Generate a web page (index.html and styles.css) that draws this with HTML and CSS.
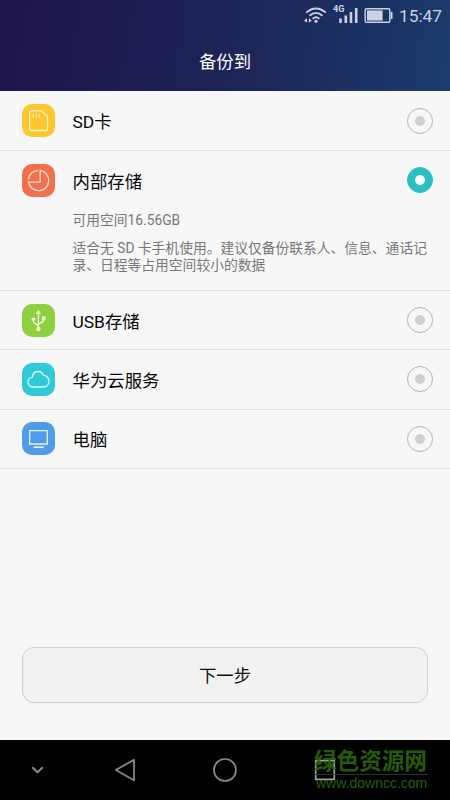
FILE: index.html
```html
<!DOCTYPE html>
<html lang="zh-CN">
<head>
<meta charset="utf-8">
<title>备份到</title>
<link rel="stylesheet" href="styles.css">
</head>
<body>
<div class="screen">
  <header class="header">
    <div class="status">
      <svg class="status-icons" width="92" height="24" viewBox="0 0 92 24" fill="none" stroke="#cdd1e2">
        <g stroke-width="1.8">
          <path d="M2.2 12.6Q12 4.4 21.8 12.6"/>
          <path d="M5.4 15.8Q12 10 18.6 15.8"/>
          <path d="M8.6 18.8Q12 15.8 15.4 18.8"/>
        </g>
        <circle cx="12" cy="21.3" r="1.6" fill="#cdd1e2" stroke="none"/>
        <path d="M3 18.2v4.6L0 20.5zM4.8 18.2v4.6l3-2.3z" fill="#cdd1e2" stroke="none"/>
        <path d="M36.5 18.5V23M41.8 15.5V23M47 12V23M52.2 8V23" stroke-width="2.6"/>
        <rect x="61.2" y="8.8" width="24.6" height="13.4" rx="1.3" stroke-width="1.4"/>
        <rect x="63" y="10.4" width="15.6" height="10.2" fill="#cdd1e2" stroke="none"/>
        <path d="M87.6 12v7" stroke-width="1.8"/>
      </svg>
      <span class="network">4G</span>
      <span class="clock">15:47</span>
    </div>
    <h1 class="title">备份到</h1>
  </header>

  <main class="content">
    <ul class="list">
      <li class="item">
        <div class="row">
          <svg class="icon" viewBox="0 0 33 33"><rect width="33" height="33" rx="10" fill="#fdc72f"/><g fill="none" stroke="#fff3bd" stroke-width="1.3" stroke-linejoin="round"><path d="M9.2 6.8H19.5L25.5 12.5V25a1.5 1.5 0 0 1-1.5 1.5H9.2A1.5 1.5 0 0 1 7.7 25V8.3A1.5 1.5 0 0 1 9.2 6.8Z"/><path d="M11.2 9.5V14M14.2 9.5V14M17.2 9.5V14" stroke-width="1"/></g></svg>
          <span class="name">SD卡</span><span class="radio"></span>
        </div>
      </li>
      <li class="item">
        <div class="row">
          <svg class="icon" viewBox="0 0 33 33"><rect width="33" height="33" rx="10" fill="#f2714d"/><g fill="none" stroke="#ffddd0" stroke-width="1.4"><path d="M18.2 6.4A10.2 10.2 0 1 1 6.5 18.1H18.2Z"/><path d="M6.3 15.6A10.2 10.2 0 0 1 15.8 6.4" stroke-width="1.1"/></g></svg>
          <span class="name">内部存储</span><span class="radio checked"></span>
        </div>
        <div class="details">
          <p class="space">可用空间16.56GB</p>
          <p class="hint">适合无 SD 卡手机使用。建议仅备份联系人、信息、通话记录、日程等占用空间较小的数据</p>
        </div>
      </li>
      <li class="item">
        <div class="row">
          <svg class="icon" viewBox="0 0 33 33"><rect width="33" height="33" rx="10" fill="#8ed03f"/><g fill="none" stroke="#f4ffe4" stroke-width="1.3"><path d="M16.4 9V25M16.4 22.5Q16.1 20.7 13.6 20Q11.4 19.2 11.4 17V15.5M16.4 20.5Q16.6 19.5 19.2 18.7Q21.7 17.8 21.7 15.5V14"/></g><g fill="#f4ffe4"><path d="M16.4 6l2.6 4h-5.2z"/><circle cx="11.4" cy="15.2" r="1.8"/><rect x="20" y="12.4" width="3.4" height="3.4"/><circle cx="16.4" cy="25" r="2.2"/></g></svg>
          <span class="name">USB存储</span><span class="radio"></span>
        </div>
      </li>
      <li class="item">
        <div class="row">
          <svg class="icon" viewBox="0 0 33 33"><rect width="33" height="33" rx="10" fill="#30c9d7"/><path d="M10.7 24C7.8 24 6 21.6 6 19.1C6 16.4 8 14.4 10.4 14.3C10.7 10.7 13.1 8.5 16.1 8.5C18.6 8.5 20.5 9.9 21.4 12.4C24.6 12.3 26.9 14.8 26.9 18.1C26.9 21.5 24.6 24 21.5 24Z" fill="none" stroke="#dcfbff" stroke-width="1.3"/></svg>
          <span class="name">华为云服务</span><span class="radio"></span>
        </div>
      </li>
      <li class="item">
        <div class="row">
          <svg class="icon" viewBox="0 0 33 33"><rect width="33" height="33" rx="10" fill="#509ce8"/><path d="M7.7 8.7H25.3V22H7.7Z" fill="none" stroke="#e4f3ff" stroke-width="1.3"/><path d="M11.5 25.2h10.3" stroke="#e4f3ff" stroke-width="1.6"/></svg>
          <span class="name">电脑</span><span class="radio"></span>
        </div>
      </li>
    </ul>
    <button class="next">下一步</button>
  </main>

  <footer class="navbar">
    <svg width="450" height="60" viewBox="0 0 450 60" fill="none" stroke="#8b8b8b" stroke-width="1.7" stroke-linejoin="round">
      <path d="M32.3 27.3l5.2 4.9 5.2-4.9" stroke-width="2"/>
      <path d="M115.8 30L134 19.8V40.3Z"/>
      <circle cx="225" cy="30" r="11"/>
      <rect x="315.7" y="20.7" width="18.6" height="18.6" stroke="#a0a0a0"/>
    </svg>
    <div class="watermark">
      <span class="mark-name">绿色资源网</span>
      <span class="mark-url">www.downcc.com</span>
    </div>
  </footer>
</div>
</body>
</html>
```

FILE: styles.css
```css
* {
  box-sizing: border-box;
  margin: 0;
  padding: 0;
}

body {
  background: #f7f7f7;
  font-family: Roboto, "Noto Sans CJK SC", sans-serif;
}

.screen {
  display: flex;
  flex-direction: column;
  width: 450px;
  height: 800px;
  overflow: hidden;
}

.header {
  height: 91px;
  background: linear-gradient(100deg, #1f174b 5%, #1d2255 45%, #1c2b5e 68%, #1b3b6b 98%);
}

.status {
  position: relative;
  display: flex;
  justify-content: flex-end;
  align-items: flex-start;
  gap: 3px;
  height: 32px;
  padding-right: 8px;
}

.network {
  position: absolute;
  left: 333px;
  top: 4px;
  color: #cdd1e2;
  font-size: 9px;
  font-weight: 700;
  line-height: 11px;
}

.clock {
  width: 43px;
  padding-top: 6px;
  color: #cdd1e2;
  font-size: 17.3px;
  line-height: 21px;
  white-space: nowrap;
}

.title {
  color: #fff;
  font-size: 17.4px;
  font-weight: 400;
  line-height: 26px;
  padding-top: 17px;
  text-align: center;
}

.content {
  display: flex;
  flex: 1;
  flex-direction: column;
  justify-content: space-between;
  padding-bottom: 37px;
  background: #f7f7f7;
}

.list {
  list-style: none;
}

.item {
  border-bottom: 1px solid #e3e3e3;
}

.row {
  display: flex;
  align-items: center;
  height: 58.2px;
  padding: 0 17px 0 22px;
}

.item:first-child .row {
  height: 59px;
}

.icon {
  width: 33px;
  height: 33px;
}

.name {
  flex: 1;
  padding-top: 3px;
  padding-left: 17.5px;
  color: #080808;
  font-size: 17.4px;
  line-height: 26px;
}

.radio {
  display: flex;
  align-items: center;
  justify-content: center;
  width: 26px;
  height: 26px;
  border: 1px solid #b5b5b5;
  border-radius: 50%;
}

.radio::before {
  width: 10px;
  height: 10px;
  border-radius: 50%;
  background: #d0d0d0;
  content: "";
}

.radio.checked {
  border-color: #2abfc1;
  background: #2abfc1;
}

.radio.checked::before {
  background: #fff;
}

.details {
  height: 81px;
  padding: 3px 20px 0 72.5px;
  color: #777;
  font-size: 13.78px;
  line-height: 17px;
}

.hint {
  padding-top: 11px;
}

.next {
  height: 56px;
  margin: 0 22px;
  padding-bottom: 2px;
  border: 1px solid #cfcfcf;
  border-radius: 12px;
  background: #f2f2f2;
  color: #111;
  font: inherit;
  font-size: 17.4px;
}

.navbar {
  position: relative;
  height: 60px;
  background: #000;
}

.navbar svg {
  display: block;
}

.watermark {
  position: absolute;
  left: 314px;
  top: 8px;
  width: 114px;
  color: rgba(43, 105, 8, 0.9);
  white-space: nowrap;
}

.mark-name {
  display: block;
  height: 27px;
  border-bottom: 1px solid #303030;
  font-size: 22.6px;
  font-weight: 700;
  line-height: 27px;
}

.mark-url {
  display: block;
  padding-left: 2px;
  font-family: "Liberation Sans", sans-serif;
  font-size: 14px;
  line-height: 16px;
}
```
